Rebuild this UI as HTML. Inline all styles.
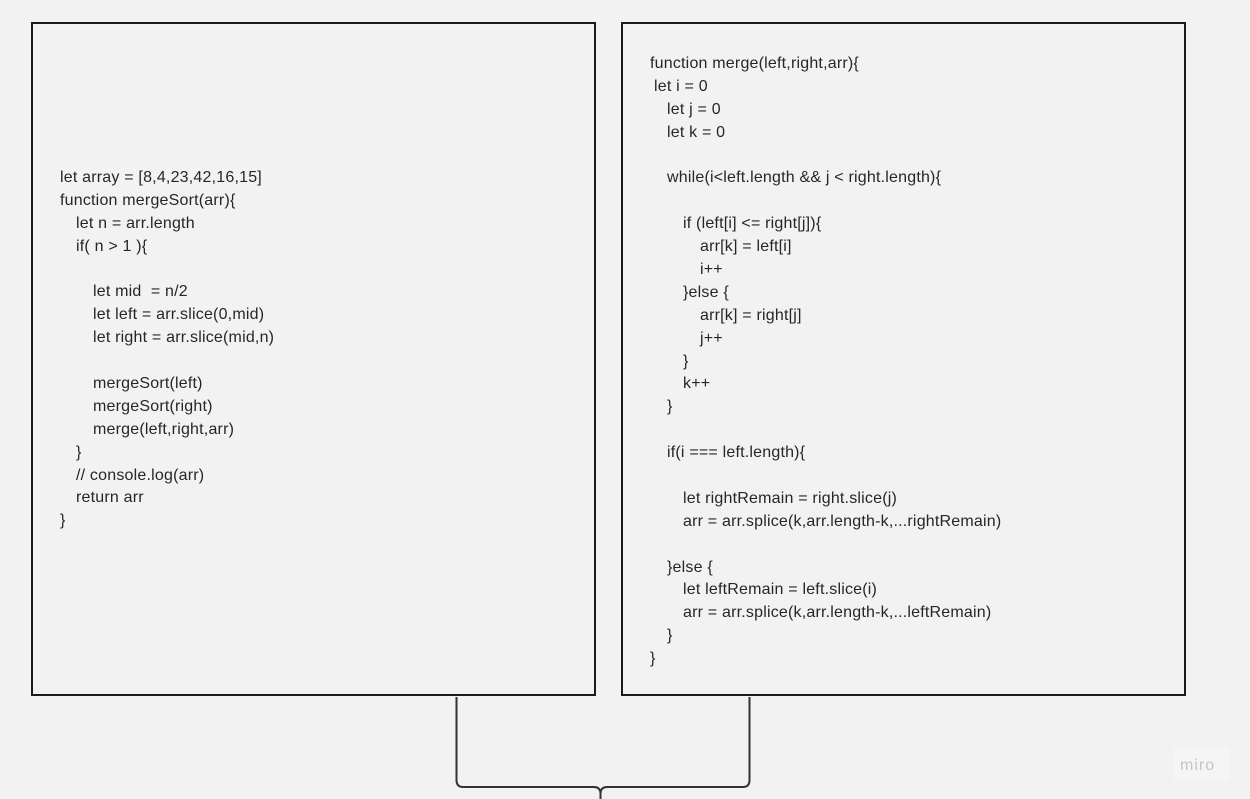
<!DOCTYPE html>
<html><head><meta charset="utf-8"><style>
html,body{margin:0;padding:0;background:#f2f2f2;width:1250px;height:799px;overflow:hidden;position:relative}
.box{position:absolute;border:2px solid #1a1a1a;box-sizing:border-box;background:#f2f2f2}
.code{position:absolute;font-family:"Liberation Sans",sans-serif;font-size:16px;color:#262626;line-height:22.9px;letter-spacing:0.2px}
.code div{height:22.9px;white-space:pre}
</style></head><body>
<div class="box" style="left:31px;top:22px;width:565px;height:674px"></div>
<div class="box" style="left:621px;top:22px;width:565px;height:674px"></div>
<div class="code" style="left:60px;top:167px">
<div>let array = [8,4,23,42,16,15]</div>
<div>function mergeSort(arr){</div>
<div style="margin-left:16px">let n = arr.length</div>
<div style="margin-left:16px">if( n &gt; 1 ){</div>
<div></div>
<div style="margin-left:33px">let mid  = n/2</div>
<div style="margin-left:33px">let left = arr.slice(0,mid)</div>
<div style="margin-left:33px">let right = arr.slice(mid,n)</div>
<div></div>
<div style="margin-left:33px">mergeSort(left)</div>
<div style="margin-left:33px">mergeSort(right)</div>
<div style="margin-left:33px">merge(left,right,arr)</div>
<div style="margin-left:16px">}</div>
<div style="margin-left:16px">// console.log(arr)</div>
<div style="margin-left:16px">return arr</div>
<div>}</div>
</div>
<div class="code" style="left:650px;top:53px">
<div>function merge(left,right,arr){</div>
<div style="margin-left:4px">let i = 0</div>
<div style="margin-left:17px">let j = 0</div>
<div style="margin-left:17px">let k = 0</div>
<div></div>
<div style="margin-left:17px">while(i&lt;left.length &amp;&amp; j &lt; right.length){</div>
<div></div>
<div style="margin-left:33px">if (left[i] &lt;= right[j]){</div>
<div style="margin-left:50px">arr[k] = left[i]</div>
<div style="margin-left:50px">i++</div>
<div style="margin-left:33px">}else {</div>
<div style="margin-left:50px">arr[k] = right[j]</div>
<div style="margin-left:50px">j++</div>
<div style="margin-left:33px">}</div>
<div style="margin-left:33px">k++</div>
<div style="margin-left:17px">}</div>
<div></div>
<div style="margin-left:17px">if(i === left.length){</div>
<div></div>
<div style="margin-left:33px">let rightRemain = right.slice(j)</div>
<div style="margin-left:33px">arr = arr.splice(k,arr.length-k,...rightRemain)</div>
<div></div>
<div style="margin-left:17px">}else {</div>
<div style="margin-left:33px">let leftRemain = left.slice(i)</div>
<div style="margin-left:33px">arr = arr.splice(k,arr.length-k,...leftRemain)</div>
<div style="margin-left:17px">}</div>
<div>}</div>
</div>
<svg style="position:absolute;left:0;top:0" width="1250" height="799">
<path d="M456.5 697 V780 Q456.5 787 463 787 H594 Q600 787 600.5 793 V799 M600.5 793 Q601 787 607 787 H743 Q749.5 787 749.5 780 V697" fill="none" stroke="#333" stroke-width="2"/>
<rect x="1173" y="748" width="56" height="32" fill="#f5f5f5"/>
<text x="1180" y="770" font-family="Liberation Sans,sans-serif" font-size="16" fill="#c4c4cc" letter-spacing="1">miro</text>
</svg>
</body></html>
